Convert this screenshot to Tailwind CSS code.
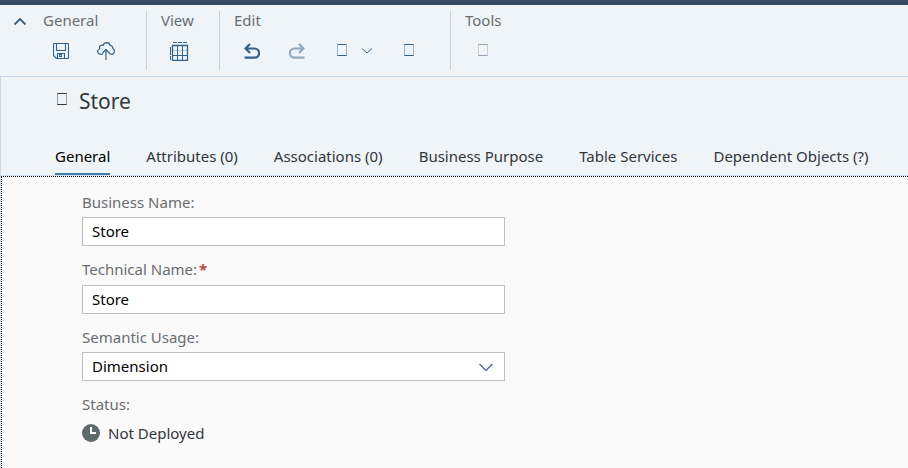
<!DOCTYPE html>
<html lang="en">
<head>
<meta charset="utf-8">
<meta name="viewport" content="width=device-width, initial-scale=1">
<title>Store</title>
<script src="https://cdn.jsdelivr.net/npm/@tailwindcss/browser@4"></script>
</head>
<body class="flex min-h-screen flex-col bg-[#fafafa] font-['Noto_Sans','Liberation_Sans',sans-serif] text-[15px] leading-5 text-[#32363a]">
<div class="h-[5px] bg-[#354a5f]"></div>

<header class="flex bg-[#eff4f9] pt-[6px] pb-[6px] text-[#346187]">
  <button type="button" aria-label="Collapse toolbar" class="flex h-5 w-[39px] justify-center">
    <svg class="h-5 w-4" viewBox="0 0 16 20" fill="none" stroke="currentColor" stroke-width="1.800"><path d="M2.500 13.500 8 8l5.500 5.500"/></svg>
  </button>
  <section class="w-[108px] border-r border-[#c9d0d7] pl-1">
    <h2 class="-mt-px text-[#6a6d70]">General</h2>
    <div class="flex gap-[9px] pt-1 pb-[2px]">
      <button type="button" aria-label="Save" class="flex h-[34px] w-9 items-center justify-center">
        <svg class="size-4" viewBox="0 0 16 16" fill="none" stroke="currentColor" stroke-width="1.100"><path d="M.5 1.500q0-1 1-1h13q1 0 1 1v13q0 1-1 1h-11l-3-3zM3.500.5v7h9v-7M4.500 15.500v-5h7v5M6.500 11.500h2v2h-2z"/></svg>
      </button>
      <button type="button" aria-label="Deploy" class="flex h-[34px] w-9 items-center justify-center">
        <svg class="h-[18px] w-[18px]" viewBox="0 0 18 18" fill="none" stroke="currentColor" stroke-width="1.200" stroke-linejoin="round"><path d="M6 11.500Q4.800 13 3 12.200.8 11.600.6 9.500.6 7.600 2.700 7 2 4.800 3.300 3.700 4.700 2.800 6 3.500 7 .8 9.500.7c2.300 0 3.400 1.300 3.700 3 2 0 3 1.300 2.600 3.100 1.200.5 1.700 1.400 1.600 2.500-.2 2-1.600 3.400-3.400 2.900q-1.300-.1-2-1M9 18V7.500M5.500 11 9 7.500l3.500 3.500"/></svg>
      </button>
    </div>
  </section>
  <section class="w-[73px] border-r border-[#c9d0d7] pl-[14px]">
    <h2 class="-mt-px text-[#6a6d70]">View</h2>
    <div class="flex pt-1">
      <button type="button" aria-label="Table view" class="flex h-[34px] w-9 items-center justify-center">
        <svg class="h-[19px] w-5" viewBox="0 0 20 19" fill="none" stroke="currentColor"><path d="M4 .5h4M9 .5h4M14 .5h4M1.500 5v8M1.500 14v4M8.500 4v14M13.500 4v14M3 13.500h16"/><path opacity=".3" d="M4 8.500h14"/><path stroke-width="1.300" d="M3.500 3.500h15v15h-15z"/></svg>
      </button>
    </div>
  </section>
  <section class="w-[231px] border-r border-[#c9d0d7] pl-[14px]">
    <h2 class="-mt-px text-[#6a6d70]">Edit</h2>
    <div class="flex gap-[9px] pt-1">
      <button type="button" aria-label="Undo" class="flex h-[34px] w-9 items-center justify-center">
        <svg class="h-4 w-4" viewBox="0 0 16 16" fill="none" stroke="currentColor" stroke-width="2.200"><path d="M6 1 1.600 5.500 6 10M1.600 5.500H10.500a4.400 4.400 0 0 1 0 9.200H.5"/></svg>
      </button>
      <button type="button" aria-label="Redo" disabled class="flex h-[34px] w-9 items-center justify-center opacity-50">
        <svg class="h-4 w-4" viewBox="0 0 16 16" fill="none" stroke="currentColor" stroke-width="2.200"><path d="M10 1l4.400 4.500L10 10M14.400 5.500H5.500a4.400 4.400 0 0 0 0 9.200H15.500"/></svg>
      </button>
      <div class="mr-2 flex">
        <button type="button" aria-label="Edit action" class="flex h-[34px] w-9 items-center justify-center pb-[3px]"><span class="h-3 w-[10px] border border-x-current/45 border-y-current"></span></button>
        <button type="button" aria-label="More edit actions" class="flex h-[34px] w-[14px] items-center justify-center">
          <svg class="h-[6px] w-3" viewBox="0 0 12 6" fill="none" stroke="currentColor"><path d="M1 .5l5 4.500 5-4.500"/></svg>
        </button>
      </div>
      <button type="button" aria-label="Edit option" class="flex h-[34px] w-9 items-center justify-center pb-[3px]"><span class="h-3 w-[10px] border border-x-current/45 border-y-current"></span></button>
    </div>
  </section>
  <section class="pl-[14px]">
    <h2 class="-mt-px text-[#6a6d70]">Tools</h2>
    <div class="flex pt-1">
      <button type="button" aria-label="Tool" disabled class="flex h-[34px] w-9 items-center justify-center pb-[3px] opacity-50"><span class="h-3 w-[10px] border border-x-current/45 border-y-current"></span></button>
    </div>
  </section>
</header>

<main class="flex flex-1 flex-col border-t border-l border-[#cbdcec]">
  <div class="border-b border-[#d3e3f2] bg-[#eff4f9] pl-[54px]">
    <div class="flex h-12 items-center">
      <span class="mr-3 ml-[2px] mb-1 h-3 w-[10px] border border-x-current/45 border-y-current"></span>
      <h1 class="text-[21px] leading-7">Store</h1>
    </div>
    <nav class="flex gap-9 pt-[19px] whitespace-nowrap">
      <a href="#general" aria-current="page" class="border-b-2 border-[#427cac] pt-[2px] pb-[7px] text-black">General</a>
      <a href="#attributes" class="pt-[2px]">Attributes (0)</a>
      <a href="#associations" class="pt-[2px]">Associations (0)</a>
      <a href="#purpose" class="pt-[2px]">Business Purpose</a>
      <a href="#services" class="pt-[2px]">Table Services</a>
      <a href="#dependents" class="pt-[2px]">Dependent Objects (?)</a>
    </nav>
  </div>
  <form class="flex-1 border-t border-l border-dotted border-black bg-[#fafafa] pt-[15px] pl-20">
    <div class="flex max-w-[423px] flex-col">
      <label for="business" class="text-[#6a6d70]">Business Name:</label>
      <input id="business" value="Store" class="mt-[5px] h-[29px] border border-[#bfbfbf] bg-white px-[9px] pb-[2px] text-black">
      <label for="technical" class="mt-[13px] text-[#6a6d70]">Technical Name:<span class="ml-[2px] font-bold text-[#c04545]">*</span></label>
      <input id="technical" value="Store" required class="mt-[6px] h-[29px] border border-[#bfbfbf] bg-white px-[9px] pb-[2px] text-black">
      <label for="usage" class="mt-[13px] text-[#6a6d70]">Semantic Usage:</label>
      <div class="mt-[5px] grid items-center">
        <select id="usage" class="col-start-1 row-start-1 h-[29px] appearance-none border border-[#bfbfbf] bg-white px-[9px] pb-[2px] text-black"><option>Dimension</option></select>
        <svg class="pointer-events-none col-start-1 row-start-1 mr-3 h-2 w-[14px] justify-self-end" viewBox="0 0 14 8" fill="none" stroke="#4a5f8f" stroke-width="1.200"><path d="M.5 1 7 7.500 13.500 1"/></svg>
      </div>
      <div class="mt-[13px] text-[#6a6d70]">Status:</div>
      <div class="mt-[9px] flex items-center gap-2">
        <svg class="size-[18px]" viewBox="0 0 18 18"><circle cx="9" cy="9" r="9" fill="#5e696e"/><path d="M9 3v6h5" fill="none" stroke="#fff" stroke-width="2"/></svg>
        <span>Not Deployed</span>
      </div>
    </div>
  </form>
</main>
</body>
</html>
